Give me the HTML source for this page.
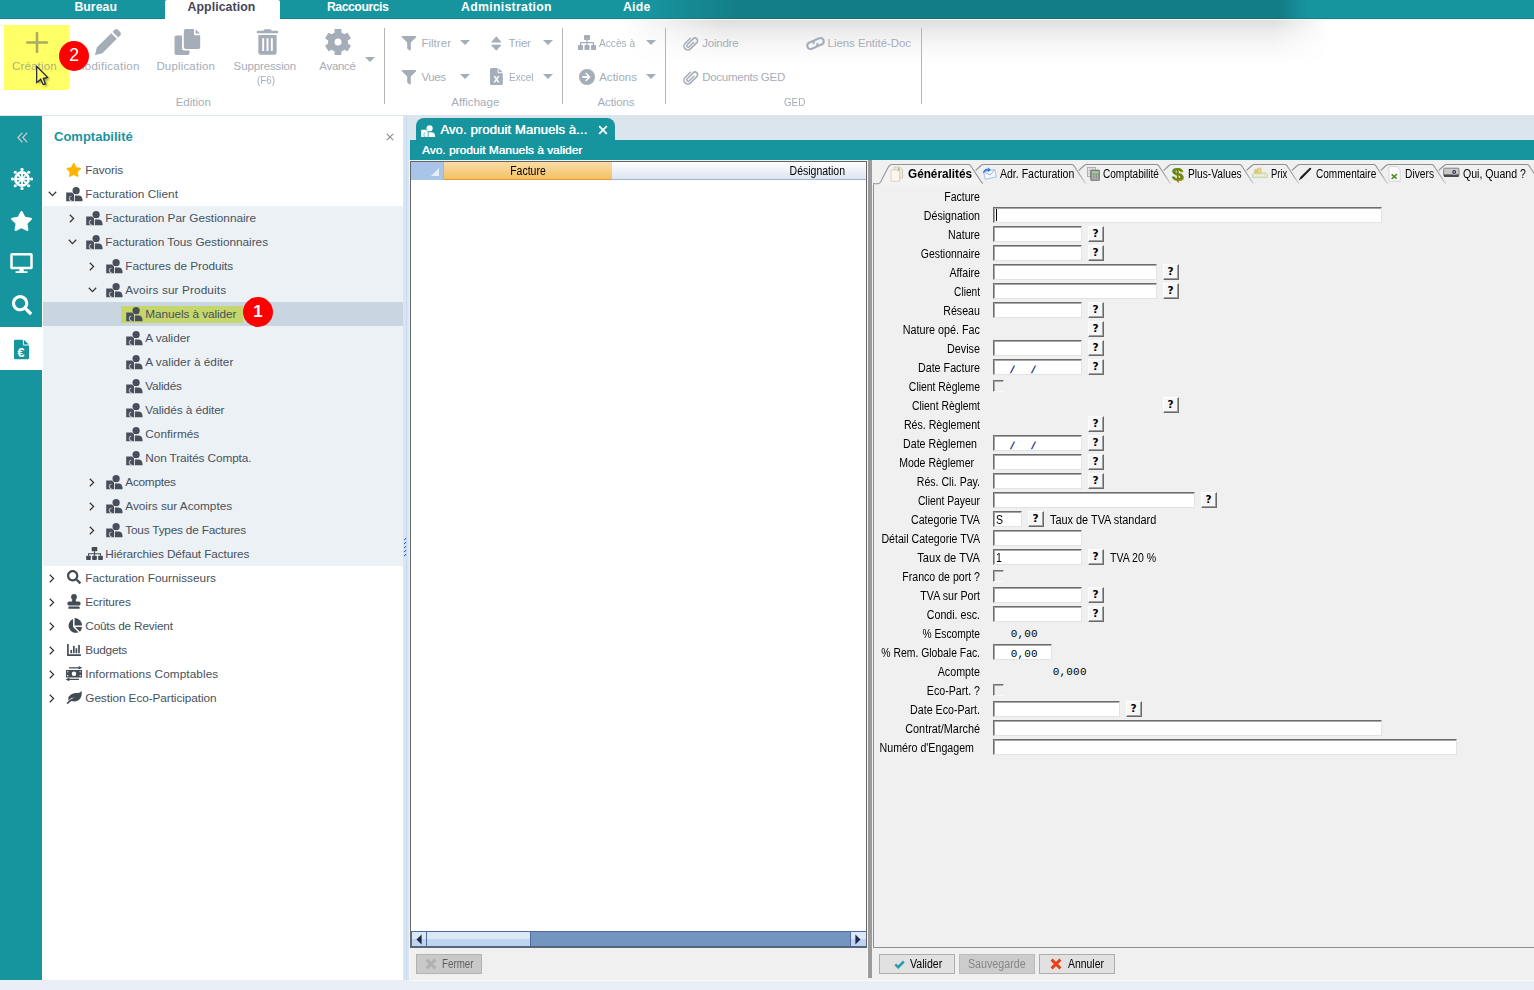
<!DOCTYPE html>
<html lang="fr">
<head>
<meta charset="utf-8">
<title>Avo. produit Manuels à valider</title>
<style>
*{box-sizing:border-box;margin:0;padding:0}
html,body{width:1534px;height:990px;overflow:hidden;background:#e9eff5;font-family:"Liberation Sans",sans-serif;}
.abs{position:absolute}
#root{position:absolute;left:0;top:0;width:1534px;height:990px;overflow:hidden;background:#dbe5ee}
/* top bar */
#topbar{left:0;top:0;width:1534px;height:19px;background:#17959f;border-bottom:1px solid #128590}
#topbar .shade{left:650px;top:0;width:660px;height:19px;background:linear-gradient(90deg,rgba(0,0,0,0) 0,rgba(0,0,0,.08) 6%,rgba(0,0,0,.155) 13.5%,rgba(0,0,0,.165) 95.5%,rgba(0,0,0,.06) 98%,rgba(0,0,0,0) 100%)}
.mtab{position:absolute;top:0;height:19px;line-height:15px;color:#fff;font-weight:bold;font-size:12.3px;white-space:nowrap}
#acttab{left:165.4px;top:0;width:115px;height:20px;background:#fff;border-radius:2px 2px 0 0}
/* ribbon */
#ribbon{left:0;top:19px;width:1534px;height:97px;background:#fff;border-bottom:1px solid #dde6ee}
#ribshade{left:620px;top:20px;width:710px;height:46px;background:linear-gradient(180deg,rgba(0,0,0,.13) 0,rgba(0,0,0,.075) 25%,rgba(0,0,0,.028) 58%,rgba(0,0,0,0) 100%);-webkit-mask-image:linear-gradient(90deg,transparent 0,#000 14%,#000 92%,transparent 100%);mask-image:linear-gradient(90deg,transparent 0,#000 14%,#000 92%,transparent 100%)}
.rl{position:absolute;color:#a5adb8;font-size:11.5px;letter-spacing:.18px;white-space:nowrap;line-height:14px}
.rc{text-align:center;transform:translateX(-50%)}
.rsep{position:absolute;top:28px;width:1px;height:76px;background:#b5b5b5}
.ric{position:absolute;fill:#a5adb8}
.caret{position:absolute;width:0;height:0;border-left:5px solid transparent;border-right:5px solid transparent;border-top:5px solid #a5adb8}
/* sidebar */
#side{left:0;top:116px;width:42px;height:864px;background:#17959f}
#side .sel{left:0;top:211px;width:42px;height:43px;background:#fff}
#tree{left:42px;top:116px;width:361px;height:864px;background:#fff}
#tree .exp{left:1px;top:90px;width:360px;height:360px;background:#ecf1f6}
#tree .selrow{left:1px;top:186px;width:360px;height:24px;background:#c9d6e2}
#tree .hl{left:79px;top:190px;width:122px;height:17px;background:#c5d66a}
.tt{position:absolute;font-size:11.8px;color:#47515c;white-space:nowrap;line-height:14px}

.tic{position:absolute;fill:#444c55}
.badge{position:absolute;width:29.6px;height:29.6px;border-radius:15px;background:#fe0000;color:#fff;font-size:17.6px;line-height:29.6px;text-align:center}
</style>
</head>
<body>
<div id="root">

<!-- TOP BAR -->
<div id="topbar" class="abs">
  <div class="shade abs"></div>
</div>

<!-- RIBBON -->
<div id="ribbon" class="abs"></div>
<div id="ribshade" class="abs"></div>
<div id="ribitems">
  <div class="abs" style="left:4px;top:25px;width:65px;height:65px;background:#ffff66"></div>
  <div class="caret" style="left:365px;top:57px"></div>
  <div class="rsep" style="left:384px"></div><div class="caret" style="left:460px;top:40px"></div><div class="caret" style="left:543px;top:40px"></div><div class="caret" style="left:460px;top:74px"></div><div class="caret" style="left:543px;top:74px"></div>
  <div class="rsep" style="left:562px"></div><div class="caret" style="left:646px;top:40px"></div><div class="caret" style="left:646px;top:74px"></div>
  <div class="rsep" style="left:665px"></div>
  <div class="rsep" style="left:921px"></div>
</div>

<div class="rl" style="left:12.0px;top:58.7px;letter-spacing:0.16px;color:#aeb07a">Création</div><div class="rl" style="left:74.9px;top:58.7px;letter-spacing:0.28px">Modification</div><div class="rl" style="left:156.4px;top:58.7px;letter-spacing:0.17px">Duplication</div><div class="rl" style="left:233.6px;top:58.7px;letter-spacing:-0.13px">Suppression</div><div class="rl" style="left:257.1px;top:73.1px;letter-spacing:0;transform-origin:0 50%;transform:scaleX(0.853)">(F6)</div><div class="rl" style="left:319.3px;top:58.7px;letter-spacing:-0.31px">Avancé</div><div class="rl" style="left:175.7px;top:94.5px;letter-spacing:0.00px">Edition</div><div class="rl" style="left:421.4px;top:35.5px;letter-spacing:0.03px">Filtrer</div><div class="rl" style="left:508.6px;top:35.5px;letter-spacing:-0.23px">Trier</div><div class="rl" style="left:421.4px;top:69.9px;letter-spacing:-0.40px">Vues</div><div class="rl" style="left:508.6px;top:69.9px;letter-spacing:0;transform-origin:0 50%;transform:scaleX(0.875)">Excel</div><div class="rl" style="left:451.2px;top:94.5px;letter-spacing:0.06px">Affichage</div><div class="rl" style="left:599.2px;top:35.5px;letter-spacing:0;transform-origin:0 50%;transform:scaleX(0.882)">Accès à</div><div class="rl" style="left:599.2px;top:69.9px;letter-spacing:0.01px">Actions</div><div class="rl" style="left:597.6px;top:94.5px;letter-spacing:-0.14px">Actions</div><div class="rl" style="left:702.2px;top:35.5px;letter-spacing:-0.22px">Joindre</div><div class="rl" style="left:702.2px;top:69.9px;letter-spacing:-0.27px">Documents GED</div><div class="rl" style="left:827.6px;top:35.5px;letter-spacing:-0.06px">Liens Entité-Doc</div><div class="rl" style="left:784.4px;top:94.5px;letter-spacing:0;transform-origin:0 50%;transform:scaleX(0.851)">GED</div>
<div id="acttab" class="abs"></div><div class="mtab" style="left:74.4px;letter-spacing:0.03px;color:#fff">Bureau</div><div class="mtab" style="left:187.5px;letter-spacing:0.09px;color:#484556">Application</div><div class="mtab" style="left:326.9px;letter-spacing:-0.48px;color:#fff">Raccourcis</div><div class="mtab" style="left:461.0px;letter-spacing:0.29px;color:#fff">Administration</div><div class="mtab" style="left:623.0px;letter-spacing:0.21px;color:#fff">Aide</div>
<svg class="abs " style="left:26px;top:32px;" width="22" height="21" viewBox="0 0 22 21"><path d="M11 1.2V19.8M1.2 10.5H20.8" stroke="#a9ac62" stroke-width="2.6" stroke-linecap="round" fill="none"/></svg><svg class="abs " style="left:94px;top:28px;" width="28" height="28" viewBox="0 0 28 28"><g fill="#a5adb8"><path d="M17.2 5.2 L22.8 10.8 L8.4 25.2 L1.6 26.9 Q.9 27.1 1.1 26.4 L2.8 19.6 Z"/><path d="M18.6 3.8 L20.6 1.8 Q22.3 .3 24 1.8 L26.2 4 Q27.7 5.7 26.2 7.4 L24.2 9.4 Z"/></g></svg><svg class="abs " style="left:174px;top:28px;" width="27" height="27" viewBox="0 0 27 27"><g fill="#a5adb8"><path d="M2.5 7.5 H8 V20.5 Q8 22.5 10 22.5 H15.5 V25 Q15.5 27 13.5 27 H2.5 Q.5 27 .5 25 V9.5 Q.5 7.5 2.5 7.5Z"/><path d="M11.8 1 H20 V6.2 Q20 7.2 21 7.2 H26.2 V19 Q26.2 21 24.2 21 H11.8 Q9.8 21 9.8 19 V3 Q9.8 1 11.8 1Z"/><path d="M21.6 1.2 L26 5.6 H21.6Z"/></g></svg><svg class="abs " style="left:256px;top:29px;" width="23" height="26" viewBox="0 0 23 27"><g fill="#a5adb8"><path d="M7.6 1 Q8 .2 8.9 .2 H14.1 Q15 .2 15.4 1 L15.8 1.9 H21.6 Q22.6 1.9 22.6 2.9 V3.6 Q22.6 4.4 21.6 4.4 H1.4 Q.4 4.4 .4 3.6 V2.9 Q.4 1.9 1.4 1.9 H7.2Z"/><path fill-rule="evenodd" d="M2 6.3 H21 V24.4 Q21 26.8 18.6 26.8 H4.4 Q2 26.8 2 24.4Z M6 9.6 V22.9 H8 V9.6Z M10.5 9.6 V22.9 H12.5 V9.6Z M15 9.6 V22.9 H17 V9.6Z"/></g></svg><svg class="abs " style="left:324px;top:28px;" width="28" height="28" viewBox="-56 -56 112 112"><g fill="#a5adb8" stroke="#a5adb8"><path fill-rule="evenodd" stroke-linejoin="round" stroke-width="6" d="M-17.7 -32.5 L-10.8 -35.4 L-10.9 -48.8 L10.9 -48.8 L10.8 -35.4 L19.3 -31.5 L25.2 -27.1 L36.8 -33.8 L47.7 -15.0 L36.1 -8.3 L37.0 1.0 L36.1 8.3 L47.7 15.0 L36.8 33.8 L25.2 27.1 L17.7 32.5 L10.8 35.4 L10.9 48.8 L-10.9 48.8 L-10.8 35.4 L-19.3 31.5 L-25.2 27.1 L-36.8 33.8 L-47.7 15.0 L-36.1 8.3 L-37.0 -1.0 L-36.1 -8.3 L-47.7 -15.0 L-36.8 -33.8 L-25.2 -27.1Z M17 0 A17 17 0 1 0 -17 0 A17 17 0 1 0 17 0Z"/></g></svg><svg class="abs " style="left:400.5px;top:36px;fill:#a5adb8;preserveAspectRatio:none" width="16" height="14.5" viewBox="0 0 512 512"><path d="M487.976 0H24.028C2.71 0-8.047 25.866 7.058 40.971L192 225.941V432c0 7.831 3.821 15.17 10.237 19.662l80 55.98C298.02 518.69 320 507.493 320 487.98V225.941l184.947-184.97C520.021 25.896 509.338 0 487.976 0z"/></svg><svg class="abs " style="left:400.5px;top:70px;fill:#a5adb8;preserveAspectRatio:none" width="16" height="14.5" viewBox="0 0 512 512"><path d="M487.976 0H24.028C2.71 0-8.047 25.866 7.058 40.971L192 225.941V432c0 7.831 3.821 15.17 10.237 19.662l80 55.98C298.02 518.69 320 507.493 320 487.98V225.941l184.947-184.97C520.021 25.896 509.338 0 487.976 0z"/></svg><svg class="abs " style="left:490.5px;top:35.5px;" width="10.5" height="15" viewBox="0 0 11 16"><g fill="#a5adb8"><path d="M5.5 .3 L10.6 6 Q11 6.8 10 6.8 H1 Q0 6.8 .4 6Z"/><path d="M5.5 15.7 L10.6 10 Q11 9.2 10 9.2 H1 Q0 9.2 .4 10Z"/></g></svg><svg class="abs " style="left:490px;top:68px;" width="13" height="17" viewBox="0 0 13 17"><path fill="#a5adb8" fill-rule="evenodd" d="M1.5 0 H7.6 V4 Q7.6 5.2 8.8 5.2 H12.8 V15.5 Q12.8 17 11.3 17 H1.5 Q0 17 0 15.5 V1.5 Q0 0 1.5 0Z M8.6 .3 L12.6 4.2 H8.6Z M3.4 8 L5.6 11.3 L3.4 14.6 H5.2 L6.5 12.5 L7.8 14.6 H9.6 L7.4 11.3 L9.6 8 H7.8 L6.5 10.1 L5.2 8Z"/></svg><svg class="abs " style="left:578px;top:35px;" width="18" height="15" viewBox="0 0 18 15"><g fill="#a5adb8"><rect x="6" y="0" width="6" height="5" rx=".8"/><rect x="0" y="10" width="5" height="5" rx=".8"/><rect x="6.5" y="10" width="5" height="5" rx=".8"/><rect x="13" y="10" width="5" height="5" rx=".8"/><path d="M8.4 5 h1.2 v2 h6.4 v3 h-1.2 v-1.8 h-5.2 v1.8 h-1.2 v-1.8 h-5.2 v1.8 h-1.2 v-3 h6.4z"/></g></svg><svg class="abs " style="left:579px;top:69px;" width="16" height="16" viewBox="0 0 16 16"><path fill="#a5adb8" fill-rule="evenodd" d="M8 0 A8 8 0 1 1 8 16 A8 8 0 1 1 8 0Z M7.2 3.6 L6.2 4.6 L8.6 7 H3.4 V9 H8.6 L6.2 11.4 L7.2 12.4 L11.6 8Z"/></svg><svg class="abs " style="left:681.5px;top:35px;" width="17" height="17" viewBox="0 0 16 16"><g transform="rotate(45 8 8)" fill="none" stroke="#a5adb8" stroke-width="1.45" stroke-linecap="round"><path d="M4.4 4.6 V11.6 A3.6 3.6 0 0 0 11.6 11.6 V3.2 A2.5 2.5 0 0 0 6.6 3.2 V11 A1.4 1.4 0 0 0 9.4 11 V5"/></g></svg><svg class="abs " style="left:681.5px;top:69px;" width="17" height="17" viewBox="0 0 16 16"><g transform="rotate(45 8 8)" fill="none" stroke="#a5adb8" stroke-width="1.45" stroke-linecap="round"><path d="M4.4 4.6 V11.6 A3.6 3.6 0 0 0 11.6 11.6 V3.2 A2.5 2.5 0 0 0 6.6 3.2 V11 A1.4 1.4 0 0 0 9.4 11 V5"/></g></svg><svg class="abs " style="left:804.5px;top:35.5px;" width="21" height="15" viewBox="0 0 21 15"><g fill="none" stroke="#a5adb8" stroke-width="2.1" stroke-linecap="round" transform="rotate(-22 10.5 7.5)"><path d="M9.4 4.2 H5.2 A3.4 3.4 0 0 0 5.2 11 H9 A3.4 3.4 0 0 0 12.2 8.6"/><path d="M11.6 10.8 H15.8 A3.4 3.4 0 0 0 15.8 4 H12 A3.4 3.4 0 0 0 8.8 6.4"/></g></svg>
<div class="badge" style="left:59.3px;top:41.1px">2</div>
<svg class="abs " style="left:30px;top:60px;" width="24" height="30" viewBox="30 60 24 30"><defs><filter id="cs" x="-50%" y="-50%" width="220%" height="220%"><feGaussianBlur stdDeviation="0.9"/></filter></defs><path d="M38.3 68.4 V84.6 L42.6 81.2 L45.2 86.6 L47.6 85.7 L45.4 80.4 L49.9 79.5Z" fill="#3a3a10" opacity=".5" filter="url(#cs)"/><path d="M36.7 66.3 V82.6 L40.7 79.2 L43.2 84.6 L45.4 83.8 L43.3 78.4 L47.6 77.4Z" fill="#ffff66" stroke="#14143a" stroke-width="1.15" stroke-linejoin="miter"/></svg>
<div id="side" class="abs"><div class="sel abs"></div>
<svg class="abs " style="left:17px;top:16px;" width="11" height="11" viewBox="0 0 11 11"><path d="M5.4 .7 L1 5.5 L5.4 10.3 M10.2 .7 L5.8 5.5 L10.2 10.3" fill="none" stroke="#cfc8cb" stroke-width="1.25"/></svg>
<svg class="abs " style="left:11px;top:52px;" width="22" height="22" viewBox="-52 -52 104 104"><g fill="#fff" stroke="#fff"><circle cx="0" cy="0" r="31" fill="none" stroke-width="13"/><circle cx="0" cy="0" r="10" stroke="none"/><line x1="0" y1="0" x2="31.0" y2="0.0" stroke-width="8.5"/><circle cx="45.0" cy="0.0" r="7.5" stroke="none"/><line x1="0" y1="0" x2="21.9" y2="21.9" stroke-width="8.5"/><circle cx="31.8" cy="31.8" r="7.5" stroke="none"/><line x1="0" y1="0" x2="0.0" y2="31.0" stroke-width="8.5"/><circle cx="0.0" cy="45.0" r="7.5" stroke="none"/><line x1="0" y1="0" x2="-21.9" y2="21.9" stroke-width="8.5"/><circle cx="-31.8" cy="31.8" r="7.5" stroke="none"/><line x1="0" y1="0" x2="-31.0" y2="0.0" stroke-width="8.5"/><circle cx="-45.0" cy="0.0" r="7.5" stroke="none"/><line x1="0" y1="0" x2="-21.9" y2="-21.9" stroke-width="8.5"/><circle cx="-31.8" cy="-31.8" r="7.5" stroke="none"/><line x1="0" y1="0" x2="-0.0" y2="-31.0" stroke-width="8.5"/><circle cx="-0.0" cy="-45.0" r="7.5" stroke="none"/><line x1="0" y1="0" x2="21.9" y2="-21.9" stroke-width="8.5"/><circle cx="31.8" cy="-31.8" r="7.5" stroke="none"/></g></svg>
<svg class="abs " style="left:10px;top:95px;fill:#fff;preserveAspectRatio:none" width="23" height="20" viewBox="0 0 576 512"><path d="M259.3 17.8L194 150.2 47.9 171.5c-26.2 3.8-36.7 36.1-17.7 54.6l105.7 103-25 145.5c-4.5 26.3 23.2 46 46.4 33.7L288 439.6l130.7 68.7c23.2 12.2 50.9-7.4 46.4-33.7l-25-145.5 105.7-103c19-18.5 8.5-50.8-17.7-54.6L382 150.2 316.7 17.8c-11.7-23.6-45.6-23.9-57.4 0z"/></svg>
<svg class="abs " style="left:10px;top:137px;fill:#fff;preserveAspectRatio:none" width="23" height="20" viewBox="0 0 576 512"><path d="M528 0H48C21.5 0 0 21.5 0 48v320c0 26.5 21.5 48 48 48h192l-16 48h-72c-13.3 0-24 10.7-24 24s10.7 24 24 24h272c13.3 0 24-10.7 24-24s-10.7-24-24-24h-72l-16-48h192c26.5 0 48-21.5 48-48V48c0-26.5-21.5-48-48-48zm-16 352H64V64h448v288z"/></svg>
<svg class="abs " style="left:12px;top:179px;fill:#fff;preserveAspectRatio:none" width="20" height="20" viewBox="0 0 512 512"><path d="M505 442.7L405.3 343c-4.5-4.5-10.6-7-17-7H372c27.6-35.3 44-79.7 44-128C416 93.1 322.9 0 208 0S0 93.1 0 208s93.1 208 208 208c48.3 0 92.7-16.4 128-44v16.3c0 6.4 2.5 12.5 7 17l99.7 99.7c9.4 9.4 24.6 9.4 33.9 0l28.3-28.3c9.4-9.4 9.4-24.6.1-34zM208 336c-70.7 0-128-57.2-128-128 0-70.7 57.2-128 128-128 70.7 0 128 57.2 128 128 0 70.7-57.2 128-128 128z"/></svg>
<svg class="abs " style="left:14px;top:223px;" width="15" height="21" viewBox="0 0 16 21"><path fill="#17959f" fill-rule="evenodd" d="M1.2 0 H9.5 V5 Q9.5 6.3 10.8 6.3 H16 V19.8 Q16 21 14.8 21 H1.2 Q0 21 0 19.8 V1.2 Q0 0 1.2 0Z M10.6 .2 L15.8 5.2 H10.6Z"/><text x="3.6" y="18.6" font-family="Liberation Sans,sans-serif" font-size="13.5" font-weight="bold" fill="#fff">€</text></svg>
</div>
<div id="tree" class="abs"><div class="exp abs"></div><div class="selrow abs"></div><div class="hl abs"></div>
<div class="abs" style="left:12px;top:14px;font-size:13px;font-weight:bold;color:#1a93a0;line-height:14px">Comptabilité</div>
<svg class="abs " style="left:344px;top:17px;" width="8" height="8" viewBox="0 0 8 8"><path d="M.8 .8 L7.2 7.2 M7.2 .8 L.8 7.2" stroke="#8c8c8c" stroke-width="1.1"/></svg>
<div class="tt" style="left:43.3px;top:47px;letter-spacing:-0.15px">Favoris</div>
<svg class="abs " style="left:24px;top:46.7px;fill:#ffb400;preserveAspectRatio:none" width="15.5" height="14" viewBox="0 0 576 512"><path d="M259.3 17.8L194 150.2 47.9 171.5c-26.2 3.8-36.7 36.1-17.7 54.6l105.7 103-25 145.5c-4.5 26.3 23.2 46 46.4 33.7L288 439.6l130.7 68.7c23.2 12.2 50.9-7.4 46.4-33.7l-25-145.5 105.7-103c19-18.5 8.5-50.8-17.7-54.6L382 150.2 316.7 17.8c-11.7-23.6-45.6-23.9-57.4 0z"/></svg>
<div class="tt" style="left:43.3px;top:71px;letter-spacing:0.01px">Facturation Client</div>
<svg class="abs " style="left:24px;top:71px;" width="17" height="14.5" viewBox="0 0 17 14.5"><g fill="#484f5b"><circle cx="10.1" cy="3.7" r="3.6"/><path d="M8.6 14.2 V8.5 H12.4 Q16.3 8.5 16.5 12.8 V14.2 Z"/><path d="M.2 5.4 H5.9 L8 7.5 V14.2 H.2Z"/></g><path d="M5.4 9 Q3.4 9.2 3.3 11.2 Q3.4 13.6 5.6 13.9" stroke="#fff" stroke-width="1.1" fill="none" opacity=".62"/><path d="M8.5 7.2 V14.2" stroke="#fff" stroke-width=".5" opacity=".8"/></svg>
<svg class="abs " style="left:5.999999999999998px;top:74.6px;" width="9" height="6" viewBox="0 0 9 6"><path d="M.8 .8 L4.5 4.6 L8.2 .8" fill="none" stroke="#363636" stroke-width="1.25"/></svg>
<div class="tt" style="left:63.3px;top:95px;letter-spacing:0.00px">Facturation Par Gestionnaire</div>
<svg class="abs " style="left:44px;top:95px;" width="17" height="14.5" viewBox="0 0 17 14.5"><g fill="#484f5b"><circle cx="10.1" cy="3.7" r="3.6"/><path d="M8.6 14.2 V8.5 H12.4 Q16.3 8.5 16.5 12.8 V14.2 Z"/><path d="M.2 5.4 H5.9 L8 7.5 V14.2 H.2Z"/></g><path d="M5.4 9 Q3.4 9.2 3.3 11.2 Q3.4 13.6 5.6 13.9" stroke="#fff" stroke-width="1.1" fill="none" opacity=".62"/><path d="M8.5 7.2 V14.2" stroke="#fff" stroke-width=".5" opacity=".8"/></svg>
<svg class="abs " style="left:27.4px;top:97.7px;" width="6" height="9" viewBox="0 0 6 9"><path d="M.8 .8 L4.6 4.5 L.8 8.2" fill="none" stroke="#363636" stroke-width="1.25"/></svg>
<div class="tt" style="left:63.3px;top:119px;letter-spacing:-0.01px">Facturation Tous Gestionnaires</div>
<svg class="abs " style="left:44px;top:119px;" width="17" height="14.5" viewBox="0 0 17 14.5"><g fill="#484f5b"><circle cx="10.1" cy="3.7" r="3.6"/><path d="M8.6 14.2 V8.5 H12.4 Q16.3 8.5 16.5 12.8 V14.2 Z"/><path d="M.2 5.4 H5.9 L8 7.5 V14.2 H.2Z"/></g><path d="M5.4 9 Q3.4 9.2 3.3 11.2 Q3.4 13.6 5.6 13.9" stroke="#fff" stroke-width="1.1" fill="none" opacity=".62"/><path d="M8.5 7.2 V14.2" stroke="#fff" stroke-width=".5" opacity=".8"/></svg>
<svg class="abs " style="left:26.0px;top:122.6px;" width="9" height="6" viewBox="0 0 9 6"><path d="M.8 .8 L4.5 4.6 L8.2 .8" fill="none" stroke="#363636" stroke-width="1.25"/></svg>
<div class="tt" style="left:83.3px;top:143px;letter-spacing:-0.05px">Factures de Produits</div>
<svg class="abs " style="left:64px;top:143px;" width="17" height="14.5" viewBox="0 0 17 14.5"><g fill="#484f5b"><circle cx="10.1" cy="3.7" r="3.6"/><path d="M8.6 14.2 V8.5 H12.4 Q16.3 8.5 16.5 12.8 V14.2 Z"/><path d="M.2 5.4 H5.9 L8 7.5 V14.2 H.2Z"/></g><path d="M5.4 9 Q3.4 9.2 3.3 11.2 Q3.4 13.6 5.6 13.9" stroke="#fff" stroke-width="1.1" fill="none" opacity=".62"/><path d="M8.5 7.2 V14.2" stroke="#fff" stroke-width=".5" opacity=".8"/></svg>
<svg class="abs " style="left:47.4px;top:145.7px;" width="6" height="9" viewBox="0 0 6 9"><path d="M.8 .8 L4.6 4.5 L.8 8.2" fill="none" stroke="#363636" stroke-width="1.25"/></svg>
<div class="tt" style="left:83.3px;top:167px;letter-spacing:0.11px">Avoirs sur Produits</div>
<svg class="abs " style="left:64px;top:167px;" width="17" height="14.5" viewBox="0 0 17 14.5"><g fill="#484f5b"><circle cx="10.1" cy="3.7" r="3.6"/><path d="M8.6 14.2 V8.5 H12.4 Q16.3 8.5 16.5 12.8 V14.2 Z"/><path d="M.2 5.4 H5.9 L8 7.5 V14.2 H.2Z"/></g><path d="M5.4 9 Q3.4 9.2 3.3 11.2 Q3.4 13.6 5.6 13.9" stroke="#fff" stroke-width="1.1" fill="none" opacity=".62"/><path d="M8.5 7.2 V14.2" stroke="#fff" stroke-width=".5" opacity=".8"/></svg>
<svg class="abs " style="left:46.0px;top:170.6px;" width="9" height="6" viewBox="0 0 9 6"><path d="M.8 .8 L4.5 4.6 L8.2 .8" fill="none" stroke="#363636" stroke-width="1.25"/></svg>
<div class="tt" style="left:103.3px;top:191px;letter-spacing:-0.08px">Manuels à valider</div>
<svg class="abs " style="left:84px;top:191px;" width="17" height="14.5" viewBox="0 0 17 14.5"><g fill="#484f5b"><circle cx="10.1" cy="3.7" r="3.6"/><path d="M8.6 14.2 V8.5 H12.4 Q16.3 8.5 16.5 12.8 V14.2 Z"/><path d="M.2 5.4 H5.9 L8 7.5 V14.2 H.2Z"/></g><path d="M5.4 9 Q3.4 9.2 3.3 11.2 Q3.4 13.6 5.6 13.9" stroke="#fff" stroke-width="1.1" fill="none" opacity=".62"/><path d="M8.5 7.2 V14.2" stroke="#fff" stroke-width=".5" opacity=".8"/></svg>
<div class="tt" style="left:103.3px;top:215px;letter-spacing:-0.06px">A valider</div>
<svg class="abs " style="left:84px;top:215px;" width="17" height="14.5" viewBox="0 0 17 14.5"><g fill="#484f5b"><circle cx="10.1" cy="3.7" r="3.6"/><path d="M8.6 14.2 V8.5 H12.4 Q16.3 8.5 16.5 12.8 V14.2 Z"/><path d="M.2 5.4 H5.9 L8 7.5 V14.2 H.2Z"/></g><path d="M5.4 9 Q3.4 9.2 3.3 11.2 Q3.4 13.6 5.6 13.9" stroke="#fff" stroke-width="1.1" fill="none" opacity=".62"/><path d="M8.5 7.2 V14.2" stroke="#fff" stroke-width=".5" opacity=".8"/></svg>
<div class="tt" style="left:103.3px;top:239px;letter-spacing:0.01px">A valider à éditer</div>
<svg class="abs " style="left:84px;top:239px;" width="17" height="14.5" viewBox="0 0 17 14.5"><g fill="#484f5b"><circle cx="10.1" cy="3.7" r="3.6"/><path d="M8.6 14.2 V8.5 H12.4 Q16.3 8.5 16.5 12.8 V14.2 Z"/><path d="M.2 5.4 H5.9 L8 7.5 V14.2 H.2Z"/></g><path d="M5.4 9 Q3.4 9.2 3.3 11.2 Q3.4 13.6 5.6 13.9" stroke="#fff" stroke-width="1.1" fill="none" opacity=".62"/><path d="M8.5 7.2 V14.2" stroke="#fff" stroke-width=".5" opacity=".8"/></svg>
<div class="tt" style="left:103.3px;top:263px;letter-spacing:-0.19px">Validés</div>
<svg class="abs " style="left:84px;top:263px;" width="17" height="14.5" viewBox="0 0 17 14.5"><g fill="#484f5b"><circle cx="10.1" cy="3.7" r="3.6"/><path d="M8.6 14.2 V8.5 H12.4 Q16.3 8.5 16.5 12.8 V14.2 Z"/><path d="M.2 5.4 H5.9 L8 7.5 V14.2 H.2Z"/></g><path d="M5.4 9 Q3.4 9.2 3.3 11.2 Q3.4 13.6 5.6 13.9" stroke="#fff" stroke-width="1.1" fill="none" opacity=".62"/><path d="M8.5 7.2 V14.2" stroke="#fff" stroke-width=".5" opacity=".8"/></svg>
<div class="tt" style="left:103.3px;top:287px;letter-spacing:-0.08px">Validés à éditer</div>
<svg class="abs " style="left:84px;top:287px;" width="17" height="14.5" viewBox="0 0 17 14.5"><g fill="#484f5b"><circle cx="10.1" cy="3.7" r="3.6"/><path d="M8.6 14.2 V8.5 H12.4 Q16.3 8.5 16.5 12.8 V14.2 Z"/><path d="M.2 5.4 H5.9 L8 7.5 V14.2 H.2Z"/></g><path d="M5.4 9 Q3.4 9.2 3.3 11.2 Q3.4 13.6 5.6 13.9" stroke="#fff" stroke-width="1.1" fill="none" opacity=".62"/><path d="M8.5 7.2 V14.2" stroke="#fff" stroke-width=".5" opacity=".8"/></svg>
<div class="tt" style="left:103.3px;top:311px;letter-spacing:0.02px">Confirmés</div>
<svg class="abs " style="left:84px;top:311px;" width="17" height="14.5" viewBox="0 0 17 14.5"><g fill="#484f5b"><circle cx="10.1" cy="3.7" r="3.6"/><path d="M8.6 14.2 V8.5 H12.4 Q16.3 8.5 16.5 12.8 V14.2 Z"/><path d="M.2 5.4 H5.9 L8 7.5 V14.2 H.2Z"/></g><path d="M5.4 9 Q3.4 9.2 3.3 11.2 Q3.4 13.6 5.6 13.9" stroke="#fff" stroke-width="1.1" fill="none" opacity=".62"/><path d="M8.5 7.2 V14.2" stroke="#fff" stroke-width=".5" opacity=".8"/></svg>
<div class="tt" style="left:103.3px;top:335px;letter-spacing:-0.11px">Non Traités Compta.</div>
<svg class="abs " style="left:84px;top:335px;" width="17" height="14.5" viewBox="0 0 17 14.5"><g fill="#484f5b"><circle cx="10.1" cy="3.7" r="3.6"/><path d="M8.6 14.2 V8.5 H12.4 Q16.3 8.5 16.5 12.8 V14.2 Z"/><path d="M.2 5.4 H5.9 L8 7.5 V14.2 H.2Z"/></g><path d="M5.4 9 Q3.4 9.2 3.3 11.2 Q3.4 13.6 5.6 13.9" stroke="#fff" stroke-width="1.1" fill="none" opacity=".62"/><path d="M8.5 7.2 V14.2" stroke="#fff" stroke-width=".5" opacity=".8"/></svg>
<div class="tt" style="left:83.3px;top:359px;letter-spacing:-0.25px">Acomptes</div>
<svg class="abs " style="left:64px;top:359px;" width="17" height="14.5" viewBox="0 0 17 14.5"><g fill="#484f5b"><circle cx="10.1" cy="3.7" r="3.6"/><path d="M8.6 14.2 V8.5 H12.4 Q16.3 8.5 16.5 12.8 V14.2 Z"/><path d="M.2 5.4 H5.9 L8 7.5 V14.2 H.2Z"/></g><path d="M5.4 9 Q3.4 9.2 3.3 11.2 Q3.4 13.6 5.6 13.9" stroke="#fff" stroke-width="1.1" fill="none" opacity=".62"/><path d="M8.5 7.2 V14.2" stroke="#fff" stroke-width=".5" opacity=".8"/></svg>
<svg class="abs " style="left:47.4px;top:361.7px;" width="6" height="9" viewBox="0 0 6 9"><path d="M.8 .8 L4.6 4.5 L.8 8.2" fill="none" stroke="#363636" stroke-width="1.25"/></svg>
<div class="tt" style="left:83.3px;top:383px;letter-spacing:-0.03px">Avoirs sur Acomptes</div>
<svg class="abs " style="left:64px;top:383px;" width="17" height="14.5" viewBox="0 0 17 14.5"><g fill="#484f5b"><circle cx="10.1" cy="3.7" r="3.6"/><path d="M8.6 14.2 V8.5 H12.4 Q16.3 8.5 16.5 12.8 V14.2 Z"/><path d="M.2 5.4 H5.9 L8 7.5 V14.2 H.2Z"/></g><path d="M5.4 9 Q3.4 9.2 3.3 11.2 Q3.4 13.6 5.6 13.9" stroke="#fff" stroke-width="1.1" fill="none" opacity=".62"/><path d="M8.5 7.2 V14.2" stroke="#fff" stroke-width=".5" opacity=".8"/></svg>
<svg class="abs " style="left:47.4px;top:385.7px;" width="6" height="9" viewBox="0 0 6 9"><path d="M.8 .8 L4.6 4.5 L.8 8.2" fill="none" stroke="#363636" stroke-width="1.25"/></svg>
<div class="tt" style="left:83.3px;top:407px;letter-spacing:-0.20px">Tous Types de Factures</div>
<svg class="abs " style="left:64px;top:407px;" width="17" height="14.5" viewBox="0 0 17 14.5"><g fill="#484f5b"><circle cx="10.1" cy="3.7" r="3.6"/><path d="M8.6 14.2 V8.5 H12.4 Q16.3 8.5 16.5 12.8 V14.2 Z"/><path d="M.2 5.4 H5.9 L8 7.5 V14.2 H.2Z"/></g><path d="M5.4 9 Q3.4 9.2 3.3 11.2 Q3.4 13.6 5.6 13.9" stroke="#fff" stroke-width="1.1" fill="none" opacity=".62"/><path d="M8.5 7.2 V14.2" stroke="#fff" stroke-width=".5" opacity=".8"/></svg>
<svg class="abs " style="left:47.4px;top:409.7px;" width="6" height="9" viewBox="0 0 6 9"><path d="M.8 .8 L4.6 4.5 L.8 8.2" fill="none" stroke="#363636" stroke-width="1.25"/></svg>
<div class="tt" style="left:63.3px;top:431px;letter-spacing:-0.11px">Hiérarchies Défaut Factures</div>
<svg class="abs " style="left:44px;top:431px;" width="17" height="13" viewBox="0 0 18 14"><g fill="#434b54"><rect x="6" y="0" width="6" height="4.6" rx=".8"/><rect x="0" y="9.4" width="5" height="4.6" rx=".8"/><rect x="6.5" y="9.4" width="5" height="4.6" rx=".8"/><rect x="13" y="9.4" width="5" height="4.6" rx=".8"/><path d="M8.4 4.6 h1.2 v2 h6.4 v2.8 h-1.2 v-1.6 h-5.2 v1.6 h-1.2 v-1.6 h-5.2 v1.6 h-1.2 v-2.8 h6.4z"/></g></svg>
<div class="tt" style="left:43.3px;top:455px;letter-spacing:0.01px">Facturation Fournisseurs</div>
<svg class="abs " style="left:25px;top:454px;fill:#434b54;preserveAspectRatio:none" width="14" height="14" viewBox="0 0 512 512"><path d="M505 442.7L405.3 343c-4.5-4.5-10.6-7-17-7H372c27.6-35.3 44-79.7 44-128C416 93.1 322.9 0 208 0S0 93.1 0 208s93.1 208 208 208c48.3 0 92.7-16.4 128-44v16.3c0 6.4 2.5 12.5 7 17l99.7 99.7c9.4 9.4 24.6 9.4 33.9 0l28.3-28.3c9.4-9.4 9.4-24.6.1-34zM208 336c-70.7 0-128-57.2-128-128 0-70.7 57.2-128 128-128 70.7 0 128 57.2 128 128 0 70.7-57.2 128-128 128z"/></svg>
<svg class="abs " style="left:7.399999999999999px;top:457.7px;" width="6" height="9" viewBox="0 0 6 9"><path d="M.8 .8 L4.6 4.5 L.8 8.2" fill="none" stroke="#363636" stroke-width="1.25"/></svg>
<div class="tt" style="left:43.3px;top:479px;letter-spacing:-0.12px">Ecritures</div>
<svg class="abs " style="left:25px;top:478px;" width="14" height="15" viewBox="0 0 14 15"><g fill="#434b54"><circle cx="7" cy="2.9" r="2.9"/><path d="M5.5 4.6 H8.5 L9.1 8.2 H4.9Z"/><rect x=".4" y="7.4" width="13.2" height="4.2" rx="1.9"/><rect x="1.4" y="12.5" width="11.2" height="2.3" rx=".5"/></g></svg>
<svg class="abs " style="left:7.399999999999999px;top:481.7px;" width="6" height="9" viewBox="0 0 6 9"><path d="M.8 .8 L4.6 4.5 L.8 8.2" fill="none" stroke="#363636" stroke-width="1.25"/></svg>
<div class="tt" style="left:43.3px;top:503px;letter-spacing:-0.19px">Coûts de Revient</div>
<svg class="abs " style="left:23.5px;top:501.5px;" width="16" height="16" viewBox="0 0 15 15"><g fill="#434b54"><path d="M6.6 1 V8.4 L11.6 13.4 A6.6 6.6 0 1 1 6.6 1Z"/><path d="M8 0 A7 7 0 0 1 15 7 H8Z"/><path d="M8.6 8.4 H15 A6.6 6.6 0 0 1 13 12.8Z"/></g></svg>
<svg class="abs " style="left:7.399999999999999px;top:505.7px;" width="6" height="9" viewBox="0 0 6 9"><path d="M.8 .8 L4.6 4.5 L.8 8.2" fill="none" stroke="#363636" stroke-width="1.25"/></svg>
<div class="tt" style="left:43.3px;top:527px;letter-spacing:-0.23px">Budgets</div>
<svg class="abs " style="left:24.5px;top:527.5px;" width="14" height="12" viewBox="0 0 15 13"><g fill="#434b54"><path d="M0 0 H1.8 V11.2 H15 V13 H0Z"/><rect x="3.6" y="6.4" width="1.8" height="3.6"/><rect x="6.4" y="2" width="1.8" height="8"/><rect x="9.2" y="4.6" width="1.8" height="5.4"/><rect x="12" y="1" width="1.8" height="9"/></g></svg>
<svg class="abs " style="left:7.399999999999999px;top:529.7px;" width="6" height="9" viewBox="0 0 6 9"><path d="M.8 .8 L4.6 4.5 L.8 8.2" fill="none" stroke="#363636" stroke-width="1.25"/></svg>
<div class="tt" style="left:43.3px;top:551px;letter-spacing:0.08px">Informations Comptables</div>
<svg class="abs " style="left:23px;top:550px;" width="18" height="15" viewBox="0 0 18 15"><g fill="#434b54"><path fill-rule="evenodd" d="M1 4 H17 V11.4 H1Z M9 5.4 A2.3 2.3 0 1 0 9 10 A2.3 2.3 0 1 0 9 5.4Z M2.2 5.2 V6.6 Q3.6 6.6 3.6 5.2Z M15.8 5.2 H14.4 Q14.4 6.6 15.8 6.6Z M2.2 10.2 H3.6 Q3.6 8.8 2.2 8.8Z M15.8 10.2 V8.8 Q14.4 8.8 14.4 10.2Z"/><path d="M13.6 0 L17.4 1.8 L13.6 3.6 V2.4 H4 V1.2 H13.6Z"/><path d="M4.4 11.6 L.6 13.4 L4.4 15.2 V14 H14 V12.8 H4.4Z"/></g></svg>
<svg class="abs " style="left:7.399999999999999px;top:553.7px;" width="6" height="9" viewBox="0 0 6 9"><path d="M.8 .8 L4.6 4.5 L.8 8.2" fill="none" stroke="#363636" stroke-width="1.25"/></svg>
<div class="tt" style="left:43.3px;top:575px;letter-spacing:-0.08px">Gestion Eco-Participation</div>
<svg class="abs " style="left:24px;top:575px;" width="16" height="13" viewBox="0 0 16 13"><path fill="#434b54" d="M15.4 0 Q16.6 4.4 14 8 Q11.2 11.4 5.6 10 Q3.6 11 2 13 L.4 12.2 Q3 8.6 8.6 6.2 Q4.6 6.8 2.4 9.4 Q1.6 5.6 5 3.4 Q8 1.8 12 2 Q14.2 1.8 15.4 0Z"/></svg>
<svg class="abs " style="left:7.399999999999999px;top:577.7px;" width="6" height="9" viewBox="0 0 6 9"><path d="M.8 .8 L4.6 4.5 L.8 8.2" fill="none" stroke="#363636" stroke-width="1.25"/></svg>
<div class="badge" style="left:201.1px;top:181.4px;font-weight:bold;font-size:17px">1</div>
</div>
<style>
#work{left:410px;top:160px;width:1124px;height:820px;background:#f0f0f0}
.ft{position:absolute;font-size:12px;line-height:14px;color:#000;white-space:nowrap;transform:scaleX(.875)}
.lab{transform-origin:100% 50%;text-align:right}
.lft{transform-origin:0 50%}
.inp{position:absolute;height:16px;background:#fff;border:1px solid;border-color:#6d6d6d #e3e3e3 #e3e3e3 #6d6d6d;box-shadow:inset 1px 1px 0 #a7a7a7}
.qb{position:absolute;width:16px;height:16px;background:#f6f6f6;border:1px solid;border-color:#fff #6a6a6a #6a6a6a #fff;box-shadow:inset -1px -1px 0 #a0a0a0;font-size:10.5px;font-weight:bold;line-height:13px;text-align:center;color:#000;padding-right:1px;font-family:"DejaVu Sans","Liberation Sans",sans-serif}
.cb{position:absolute;width:10.5px;height:12px;background:#f0f0f0;border:1px solid;border-color:#707070 #f2f2f2 #fafafa #707070;box-shadow:inset 1px 1px 0 #a9a9a9}
.mono{position:absolute;font-family:"Liberation Mono",monospace;font-size:11px;line-height:14px;color:#000;white-space:nowrap;letter-spacing:.2px}
.btn{position:absolute;height:20px;border:1px solid #adadad;background:#e1e1e1}
</style>
<div class="abs" style="left:406px;top:116px;width:1px;height:864px;background:#c5dcf9"></div>
<div class="abs" style="left:409px;top:160px;width:1px;height:820px;background:#f4f4f4"></div>
<svg class="abs " style="left:404px;top:537px;" width="3" height="22" viewBox="0 0 3 22"><g fill="#1f66d0"><rect x="1" y="1" width="1.1" height="1.1"/><rect x="0" y="2" width="1.1" height="1.1"/><rect x="1" y="5" width="1.1" height="1.1"/><rect x="0" y="6" width="1.1" height="1.1"/><rect x="1" y="9" width="1.1" height="1.1"/><rect x="0" y="10" width="1.1" height="1.1"/><rect x="1" y="13" width="1.1" height="1.1"/><rect x="0" y="14" width="1.1" height="1.1"/><rect x="1" y="17" width="1.1" height="1.1"/><rect x="0" y="18" width="1.1" height="1.1"/></g></svg>
<div class="abs" style="left:416px;top:117.5px;width:199px;height:24px;background:#17959f;border-radius:8px 8px 0 0"></div>
<svg class="abs " style="left:421px;top:124.5px;" width="14.5" height="12.5" viewBox="0 0 17 14.5"><g fill="#fff"><circle cx="10.1" cy="3.7" r="3.6"/><path d="M8.6 14.2 V8.5 H12.4 Q16.3 8.5 16.5 12.8 V14.2 Z"/><path d="M.2 5.4 H5.9 L8 7.5 V14.2 H.2Z"/></g><path d="M5.4 9 Q3.4 9.2 3.3 11.2 Q3.4 13.6 5.6 13.9" stroke="#17959f" stroke-width="1.1" fill="none" opacity=".62"/><path d="M8.5 7.2 V14.2" stroke="#17959f" stroke-width=".5" opacity=".8"/></svg>
<div class="abs" style="left:440.3px;top:121.5px;font-size:13px;line-height:15px;color:#fff;text-shadow:.35px 0 0 #fff;white-space:nowrap;letter-spacing:0.14px">Avo. produit Manuels à...</div>
<svg class="abs " style="left:598px;top:125px;" width="10" height="10" viewBox="0 0 10 10"><path d="M1.2 1.2 L8.8 8.8 M8.8 1.2 L1.2 8.8" stroke="#fff" stroke-width="1.7"/></svg>
<div class="abs" style="left:410px;top:140px;width:1124px;height:20px;background:#17959f"></div>
<div class="abs" style="left:422px;top:143px;font-size:11.8px;line-height:14px;color:#fff;text-shadow:.3px 0 0 #fff;white-space:nowrap;letter-spacing:0.06px">Avo. produit Manuels à valider</div>
<div id="work" class="abs"></div>
<div class="abs" style="left:410px;top:161px;width:457px;height:787px;background:#fff;border:1px solid #646464"></div>
<div class="abs" style="left:411px;top:162px;width:32px;height:18px;background:#a9c4e9"></div>
<svg class="abs " style="left:431px;top:168px;" width="8" height="8" viewBox="0 0 9 9"><path d="M9 0 V9 H0Z" fill="#e6edf8"/></svg>
<div class="abs" style="left:443px;top:162px;width:169px;height:18px;background:linear-gradient(180deg,#f9dca6 0,#f7d08a 45%,#f2c263 100%);border-bottom:1px solid #f29536;border-left:1px solid #f3a94f"></div>
<div class="abs" style="left:612px;top:162px;width:254px;height:18px;background:linear-gradient(180deg,#fdfdfe 0,#eef2f8 50%,#dde4f0 100%);border-bottom:1px solid #9eb6d4"></div>
<div class="ft" style="left:478px;top:164px;width:100px;text-align:center;transform-origin:50% 50%">Facture</div>
<div class="ft lab" style="left:745px;top:164px;width:100px">Désignation</div>
<div class="abs" style="left:411px;top:931px;width:455px;height:16px;background:#7396c0;border-top:1px solid #4f6c9c;border-bottom:1px solid #4a6592"></div>
<div class="abs" style="left:411px;top:932px;width:16px;height:14px;background:linear-gradient(180deg,#dce8f8 0,#dce8f8 46%,#bfd4f1 54%,#bfd4f1 100%);border-left:1px solid #4f6c9c;border-right:1px solid #4f6c9c"></div>
<div class="abs" style="left:427px;top:932px;width:104px;height:14px;background:linear-gradient(180deg,#dce8f8 0,#dce8f8 46%,#bfd4f1 54%,#bfd4f1 100%);border-right:1px solid #4f6c9c"></div>
<div class="abs" style="left:850px;top:932px;width:16px;height:14px;background:linear-gradient(180deg,#dce8f8 0,#dce8f8 46%,#bfd4f1 54%,#bfd4f1 100%);border-left:1px solid #4f6c9c"></div>
<svg class="abs " style="left:415.5px;top:933.5px;" width="6" height="11" viewBox="0 0 6 11"><path d="M5.6 .6 V10.4 L.5 5.5Z" fill="#1d2b4a"/></svg>
<svg class="abs " style="left:855px;top:933.5px;" width="6" height="11" viewBox="0 0 6 11"><path d="M.4 .6 V10.4 L5.5 5.5Z" fill="#1d2b4a"/></svg>
<div class="btn" style="left:416px;top:954px;width:66px;background:#c9c9c9;border-color:#b3b3b3"></div>
<svg class="abs " style="left:425px;top:958px;" width="12" height="12" viewBox="0 0 12 12"><path d="M1.6 1.6 L10.4 10.4 M10.4 1.6 L1.6 10.4" stroke="#b0b0b0" stroke-width="3"/></svg>
<div class="ft lft" style="left:442.4px;top:957px;color:#5e5e5e;transform:scaleX(0.815)">Fermer</div>
<div class="abs" style="left:868px;top:160px;width:4px;height:818px;background:#9b9b9b"></div>
<div class="abs" style="left:867px;top:160px;width:1px;height:820px;background:#f7f7f7"></div>
<div class="abs" style="left:873px;top:183px;width:1px;height:765px;background:#8e8e8e"></div>
<div class="abs" style="left:873px;top:947px;width:661px;height:1px;background:#8e8e8e"></div>
<svg class="abs" style="left:0;top:0" width="1534" height="990" viewBox="0 0 1534 990"><defs><linearGradient id="tg" gradientUnits="userSpaceOnUse" x1="0" y1="164" x2="0" y2="184"><stop offset="0" stop-color="#8f8f8f"/><stop offset=".55" stop-color="#a2a2a2"/><stop offset="1" stop-color="#d4d4d4"/></linearGradient></defs><path d="M975.6 170.5 L981.0 165.5 Q982.0 164.5,984.0 164.5 H1071.3999999999999 Q1073.0 164.5,1073.8999999999999 165.7 L1084.6 182.1 L1086.1 183.7" fill="none" stroke="url(#tg)" stroke-width="1.1"/><path d="M1078.8 170.5 L1084.2 165.5 Q1085.2 164.5,1087.2 164.5 H1156.1999999999998 Q1157.8 164.5,1158.6999999999998 165.7 L1169.3999999999999 182.1 L1170.8999999999999 183.7" fill="none" stroke="url(#tg)" stroke-width="1.1"/><path d="M1163.6 170.5 L1169.0 165.5 Q1170.0 164.5,1172.0 164.5 H1239.1 Q1240.7 164.5,1241.6 165.7 L1252.3 182.1 L1253.8 183.7" fill="none" stroke="url(#tg)" stroke-width="1.1"/><path d="M1246.5 170.5 L1251.9 165.5 Q1252.9 164.5,1254.9 164.5 H1284.5 Q1286.1000000000001 164.5,1287.0 165.7 L1297.7 182.1 L1299.2 183.7" fill="none" stroke="url(#tg)" stroke-width="1.1"/><path d="M1291.9 170.5 L1297.3000000000002 165.5 Q1298.3000000000002 164.5,1300.3000000000002 164.5 H1373.3 Q1374.9 164.5,1375.8 165.7 L1386.5 182.1 L1388.0 183.7" fill="none" stroke="url(#tg)" stroke-width="1.1"/><path d="M1380.7 170.5 L1386.1000000000001 165.5 Q1387.1000000000001 164.5,1389.1000000000001 164.5 H1431.3 Q1432.9 164.5,1433.8 165.7 L1444.5 182.1 L1446.0 183.7" fill="none" stroke="url(#tg)" stroke-width="1.1"/><path d="M1438.7 170.5 L1444.1000000000001 165.5 Q1445.1000000000001 164.5,1447.1000000000001 164.5 H1526.6 Q1528.2 164.5,1529.1 165.7 L1539.8 182.1 L1541.3 183.7" fill="none" stroke="url(#tg)" stroke-width="1.1"/><path d="M873.5 183.7 H878.5 Q880.1 183.29999999999998,881.1 181.1 L888.1 167.5 Q889.3 164.7,892.1 164.5 H968.2 Q969.8000000000001 164.5,970.7 165.7 L981.4 182.1 L982.9 183.7 V184.7 H873.5Z" fill="#f3f3f3" stroke="none"/><path d="M873.5 183.7 H878.5 Q880.1 183.29999999999998,881.1 181.1 L888.1 167.5 Q889.3 164.7,892.1 164.5 H968.2 Q969.8000000000001 164.5,970.7 165.7 L981.4 182.1 L982.9 183.7" fill="none" stroke="#949494" stroke-width="1.05"/></svg><div class="ft lft" style="left:907.6px;top:167px;font-weight:bold;transform:scaleX(0.980)">Généralités</div><div class="ft lft" style="left:999.9px;top:167px;transform:scaleX(0.877)">Adr. Facturation</div><div class="ft lft" style="left:1103.2px;top:167px;transform:scaleX(0.837)">Comptabilité</div><div class="ft lft" style="left:1188.3px;top:167px;transform:scaleX(0.850)">Plus-Values</div><div class="ft lft" style="left:1271.2px;top:167px;transform:scaleX(0.784)">Prix</div><div class="ft lft" style="left:1315.8px;top:167px;transform:scaleX(0.837)">Commentaire</div><div class="ft lft" style="left:1405.2px;top:167px;transform:scaleX(0.853)">Divers</div><div class="ft lft" style="left:1462.6px;top:167px;transform:scaleX(0.882)">Qui, Quand ?</div><svg class="abs " style="left:890px;top:166px;" width="14" height="16" viewBox="0 0 14 16"><path d="M4 1 H10 L12.6 3.6 V12 H4Z" fill="#efe6d8" stroke="#c9bba6" stroke-width=".7"/><path d="M1 4 H7 L9.6 6.6 V15.2 H1Z" fill="#fbf6ee" stroke="#d2c5b2" stroke-width=".7"/><path d="M8 1.4 L10 4 L8.6 4.6Z" fill="#777"/></svg><svg class="abs " style="left:982px;top:167px;" width="15" height="13" viewBox="0 0 15 13"><g transform="rotate(-12 8 8)"><rect x="2.4" y="3.6" width="11.4" height="7.6" fill="#f4f7fd" stroke="#a9bde6" stroke-width=".9"/><path d="M2.6 3.8 L8.1 8 L13.6 3.8" fill="none" stroke="#8da6d6" stroke-width=".8"/></g><path d="M1 6.4 Q1.2 1.6 6 1.8 V.4 L9 2.8 L6 5.2 V3.8 Q3 3.6 1 6.4Z" fill="#3b7be0"/></svg><svg class="abs " style="left:1087px;top:167px;" width="13" height="14" viewBox="0 0 13 14"><rect x=".5" y=".5" width="8" height="9" fill="#e8e8e8" stroke="#9a9a9a" stroke-width=".7"/><path d="M.5 3.5 H8.5 M.5 6.5 H8.5 M3.2 .5 V9.5 M5.8 .5 V9.5" stroke="#aaa" stroke-width=".5"/><rect x="3.6" y="3" width="9" height="10.6" rx=".8" fill="#8b8f8c" stroke="#5f625f" stroke-width=".6"/><rect x="4.8" y="4.2" width="6.6" height="2.4" fill="#9fcf8a"/><path d="M5 8.2 H11.4 M5 10 H11.4 M5 11.8 H11.4" stroke="#d9d9d9" stroke-width=".9" stroke-dasharray="1.4 1"/></svg><div class="abs" style="left:1170px;top:164.5px;width:15px;font-size:16.5px;line-height:19px;font-weight:bold;color:#5a8f1f;text-align:center;text-shadow:.7px .5px 0 #b8901e;transform:scaleX(1.28)">$</div><svg class="abs " style="left:1252px;top:167px;" width="16" height="12" viewBox="0 0 16 12"><path d="M.5 7.2 L2 5.8 H14 L15.5 7.2 V10.6 H.5Z" fill="#dbe7c6" stroke="#b9cba0" stroke-width=".6"/><path d="M2.4 8.3 H13.6" stroke="#f4f8ea" stroke-width="1.3" stroke-dasharray="1.6 1"/><rect x="2.6" y="2.6" width="3" height="3.6" rx=".8" fill="#e6cd86" stroke="#c8a94e" stroke-width=".5"/><rect x="5.6" y="1" width="3.4" height="5.2" rx=".8" fill="#ecd994" stroke="#c8a94e" stroke-width=".5"/></svg><svg class="abs " style="left:1298px;top:167px;" width="14" height="14" viewBox="0 0 14 14"><path d="M.8 13.2 L2.6 9.8 L11.6 1 Q12.4 .4 13 1 Q13.6 1.8 12.8 2.6 L4 11.6Z" fill="#1a1a1a"/></svg><svg class="abs " style="left:1388px;top:166px;" width="13" height="16" viewBox="0 0 13 16"><path d="M1 .6 H8.6 L12.2 4.2 V15.2 H1Z" fill="#fdfdfd" stroke="#c8c8c8" stroke-width=".7"/><path d="M3.6 8.4 L8.6 12.6 M9 8 L3.6 13" stroke="#4b8a24" stroke-width="1.6"/></svg><svg class="abs " style="left:1443px;top:167px;" width="17" height="12" viewBox="0 0 17 12"><rect x=".6" y="1.2" width="15.4" height="8" rx="1" fill="#c9c9c9" stroke="#6e6e6e" stroke-width=".8"/><rect x="1" y="7.4" width="14.6" height="2.6" fill="#4a4a4a"/><circle cx="11.2" cy="5" r="2.5" fill="#3c3c3c" stroke="#eee" stroke-width=".7"/><circle cx="11.2" cy="5" r=".9" fill="#9ad"/></svg>
<div class="ft lab" style="left:820.3px;top:189.5px;width:160px;transform:scaleX(0.880)">Facture</div><div class="ft lab" style="left:820.3px;top:208.5px;width:160px;transform:scaleX(0.887)">Désignation</div><div class="inp" style="left:993px;top:207px;width:389px"></div><div class="ft lab" style="left:820.3px;top:227.5px;width:160px;transform:scaleX(0.885)">Nature</div><div class="inp" style="left:993px;top:226px;width:89px"></div><div class="qb" style="left:1088px;top:226px">?</div><div class="ft lab" style="left:820.3px;top:246.5px;width:160px;transform:scaleX(0.870)">Gestionnaire</div><div class="inp" style="left:993px;top:245px;width:89px"></div><div class="qb" style="left:1088px;top:245px">?</div><div class="ft lab" style="left:820.3px;top:265.5px;width:160px;transform:scaleX(0.888)">Affaire</div><div class="inp" style="left:993px;top:264px;width:164px"></div><div class="qb" style="left:1163px;top:264px">?</div><div class="ft lab" style="left:820.3px;top:284.5px;width:160px;transform:scaleX(0.844)">Client</div><div class="inp" style="left:993px;top:283px;width:164px"></div><div class="qb" style="left:1163px;top:283px">?</div><div class="ft lab" style="left:820.3px;top:303.5px;width:160px;transform:scaleX(0.889)">Réseau</div><div class="inp" style="left:993px;top:302px;width:89px"></div><div class="qb" style="left:1088px;top:302px">?</div><div class="ft lab" style="left:820.3px;top:322.5px;width:160px;transform:scaleX(0.898)">Nature opé. Fac</div><div class="qb" style="left:1088px;top:321px">?</div><div class="ft lab" style="left:820.3px;top:341.5px;width:160px;transform:scaleX(0.897)">Devise</div><div class="inp" style="left:993px;top:340px;width:89px"></div><div class="qb" style="left:1088px;top:340px">?</div><div class="ft lab" style="left:820.3px;top:360.5px;width:160px;transform:scaleX(0.895)">Date Facture</div><div class="inp" style="left:993px;top:359px;width:89px"></div><div class="ft lft" style="left:1010.6px;top:362.4px;color:#24327e;font-size:10.5px;font-weight:bold;transform:skewX(-17deg) scaleX(1.05)">/</div><div class="ft lft" style="left:1031.7px;top:362.4px;color:#24327e;font-size:10.5px;font-weight:bold;transform:skewX(-17deg) scaleX(1.05)">/</div><div class="qb" style="left:1088px;top:359px">?</div><div class="ft lab" style="left:820.3px;top:379.5px;width:160px;transform:scaleX(0.867)">Client Règleme</div><div class="cb" style="left:993px;top:380.4px"></div><div class="ft lab" style="left:820.3px;top:398.5px;width:160px;transform:scaleX(0.864)">Client Règlemt</div><div class="qb" style="left:1163px;top:397px">?</div><div class="ft lab" style="left:820.3px;top:417.5px;width:160px;transform:scaleX(0.884)">Rés. Règlement</div><div class="qb" style="left:1088px;top:416px">?</div><div class="ft lab" style="left:817px;top:436.5px;width:160px;transform:scaleX(0.887)">Date Règlemen</div><div class="inp" style="left:993px;top:435px;width:89px"></div><div class="ft lft" style="left:1010.6px;top:438.4px;color:#24327e;font-size:10.5px;font-weight:bold;transform:skewX(-17deg) scaleX(1.05)">/</div><div class="ft lft" style="left:1031.7px;top:438.4px;color:#24327e;font-size:10.5px;font-weight:bold;transform:skewX(-17deg) scaleX(1.05)">/</div><div class="qb" style="left:1088px;top:435px">?</div><div class="ft lab" style="left:814.3px;top:455.5px;width:160px;transform:scaleX(0.877)">Mode Règlemer</div><div class="inp" style="left:993px;top:454px;width:89px"></div><div class="qb" style="left:1088px;top:454px">?</div><div class="ft lab" style="left:820.3px;top:474.5px;width:160px;transform:scaleX(0.880)">Rés. Cli. Pay.</div><div class="inp" style="left:993px;top:473px;width:89px"></div><div class="qb" style="left:1088px;top:473px">?</div><div class="ft lab" style="left:820.3px;top:493.5px;width:160px;transform:scaleX(0.862)">Client Payeur</div><div class="inp" style="left:993px;top:492px;width:202px"></div><div class="qb" style="left:1201px;top:492px">?</div><div class="ft lab" style="left:820.3px;top:512.5px;width:160px;transform:scaleX(0.890)">Categorie TVA</div><div class="inp" style="left:993px;top:511px;width:29px"></div><div class="ft lft" style="left:996px;top:512.5px">S</div><div class="qb" style="left:1028px;top:511px">?</div><div class="ft lft" style="left:1050.2px;top:512.5px;transform:scaleX(0.9079348116484104)">Taux de TVA standard</div><div class="ft lab" style="left:820.3px;top:531.5px;width:160px;transform:scaleX(0.883)">Détail Categorie TVA</div><div class="inp" style="left:993px;top:530px;width:89px"></div><div class="ft lab" style="left:820.3px;top:550.5px;width:160px;transform:scaleX(0.928)">Taux de TVA</div><div class="inp" style="left:993px;top:549px;width:89px"></div><div class="ft lft" style="left:996px;top:550.5px">1</div><div class="qb" style="left:1088px;top:549px">?</div><div class="ft lft" style="left:1110.2px;top:550.5px;transform:scaleX(0.8802619827329563)">TVA 20 %</div><div class="ft lab" style="left:820.3px;top:569.5px;width:160px;transform:scaleX(0.883)">Franco de port ?</div><div class="cb" style="left:993px;top:570.4px"></div><div class="ft lab" style="left:820.3px;top:588.5px;width:160px;transform:scaleX(0.889)">TVA sur Port</div><div class="inp" style="left:993px;top:587px;width:89px"></div><div class="qb" style="left:1088px;top:587px">?</div><div class="ft lab" style="left:820.3px;top:607.5px;width:160px;transform:scaleX(0.886)">Condi. esc.</div><div class="inp" style="left:993px;top:606px;width:89px"></div><div class="qb" style="left:1088px;top:606px">?</div><div class="ft lab" style="left:820.3px;top:626.5px;width:160px;transform:scaleX(0.854)">% Escompte</div><div class="mono" style="left:1010.7px;top:627px">0,00</div><div class="ft lab" style="left:820.3px;top:645.5px;width:160px;transform:scaleX(0.865)">% Rem. Globale Fac.</div><div class="inp" style="left:993px;top:644px;width:59px"></div><div class="mono" style="left:1010.7px;top:647px">0,00</div><div class="ft lab" style="left:820.3px;top:664.5px;width:160px;transform:scaleX(0.893)">Acompte</div><div class="mono" style="left:1052.7px;top:665px">0,000</div><div class="ft lab" style="left:820.3px;top:683.5px;width:160px;transform:scaleX(0.886)">Eco-Part. ?</div><div class="cb" style="left:993px;top:684.4px"></div><div class="ft lab" style="left:820.3px;top:702.5px;width:160px;transform:scaleX(0.889)">Date Eco-Part.</div><div class="inp" style="left:993px;top:701px;width:127px"></div><div class="qb" style="left:1126px;top:701px">?</div><div class="ft lab" style="left:820.3px;top:721.5px;width:160px;transform:scaleX(0.904)">Contrat/Marché</div><div class="inp" style="left:993px;top:720px;width:389px"></div><div class="ft lab" style="left:814px;top:740.5px;width:160px;transform:scaleX(0.888)">Numéro d'Engagem</div><div class="inp" style="left:993px;top:739px;width:464px"></div><div class="abs" style="left:996px;top:209px;width:1px;height:12px;background:#000"></div>
<div class="btn" style="left:879px;top:954px;width:76px"></div>
<svg class="abs " style="left:894px;top:960px;" width="11" height="9" viewBox="0 0 11 9"><path d="M1.3 4.4 L4.2 7.2 L9.8 1.5" fill="none" stroke="#2a9eb0" stroke-width="2.6"/></svg>
<div class="ft lft" style="left:909.8px;top:957px;transform:scaleX(0.883)">Valider</div>
<div class="btn" style="left:959px;top:954px;width:76px;background:#cccccc;border-color:#bcbcbc"></div>
<div class="ft lft" style="left:968.4px;top:957px;color:#868686;transform:scaleX(0.890)">Sauvegarde</div>
<div class="btn" style="left:1039px;top:954px;width:76px"></div>
<svg class="abs " style="left:1050px;top:958px;" width="12" height="12" viewBox="0 0 12 12"><path d="M1.6 1.6 L10.4 10.4 M10.4 1.6 L1.6 10.4" stroke="#e8401c" stroke-width="3"/></svg>
<div class="ft lft" style="left:1068.2px;top:957px;transform:scaleX(0.868)">Annuler</div>
<div class="abs" style="left:0;top:980px;width:1534px;height:10px;background:#e9eff5"></div><div class="abs" style="left:410px;top:979.5px;width:1124px;height:1px;background:#fafafa"></div>
</div>
</body>
</html>
